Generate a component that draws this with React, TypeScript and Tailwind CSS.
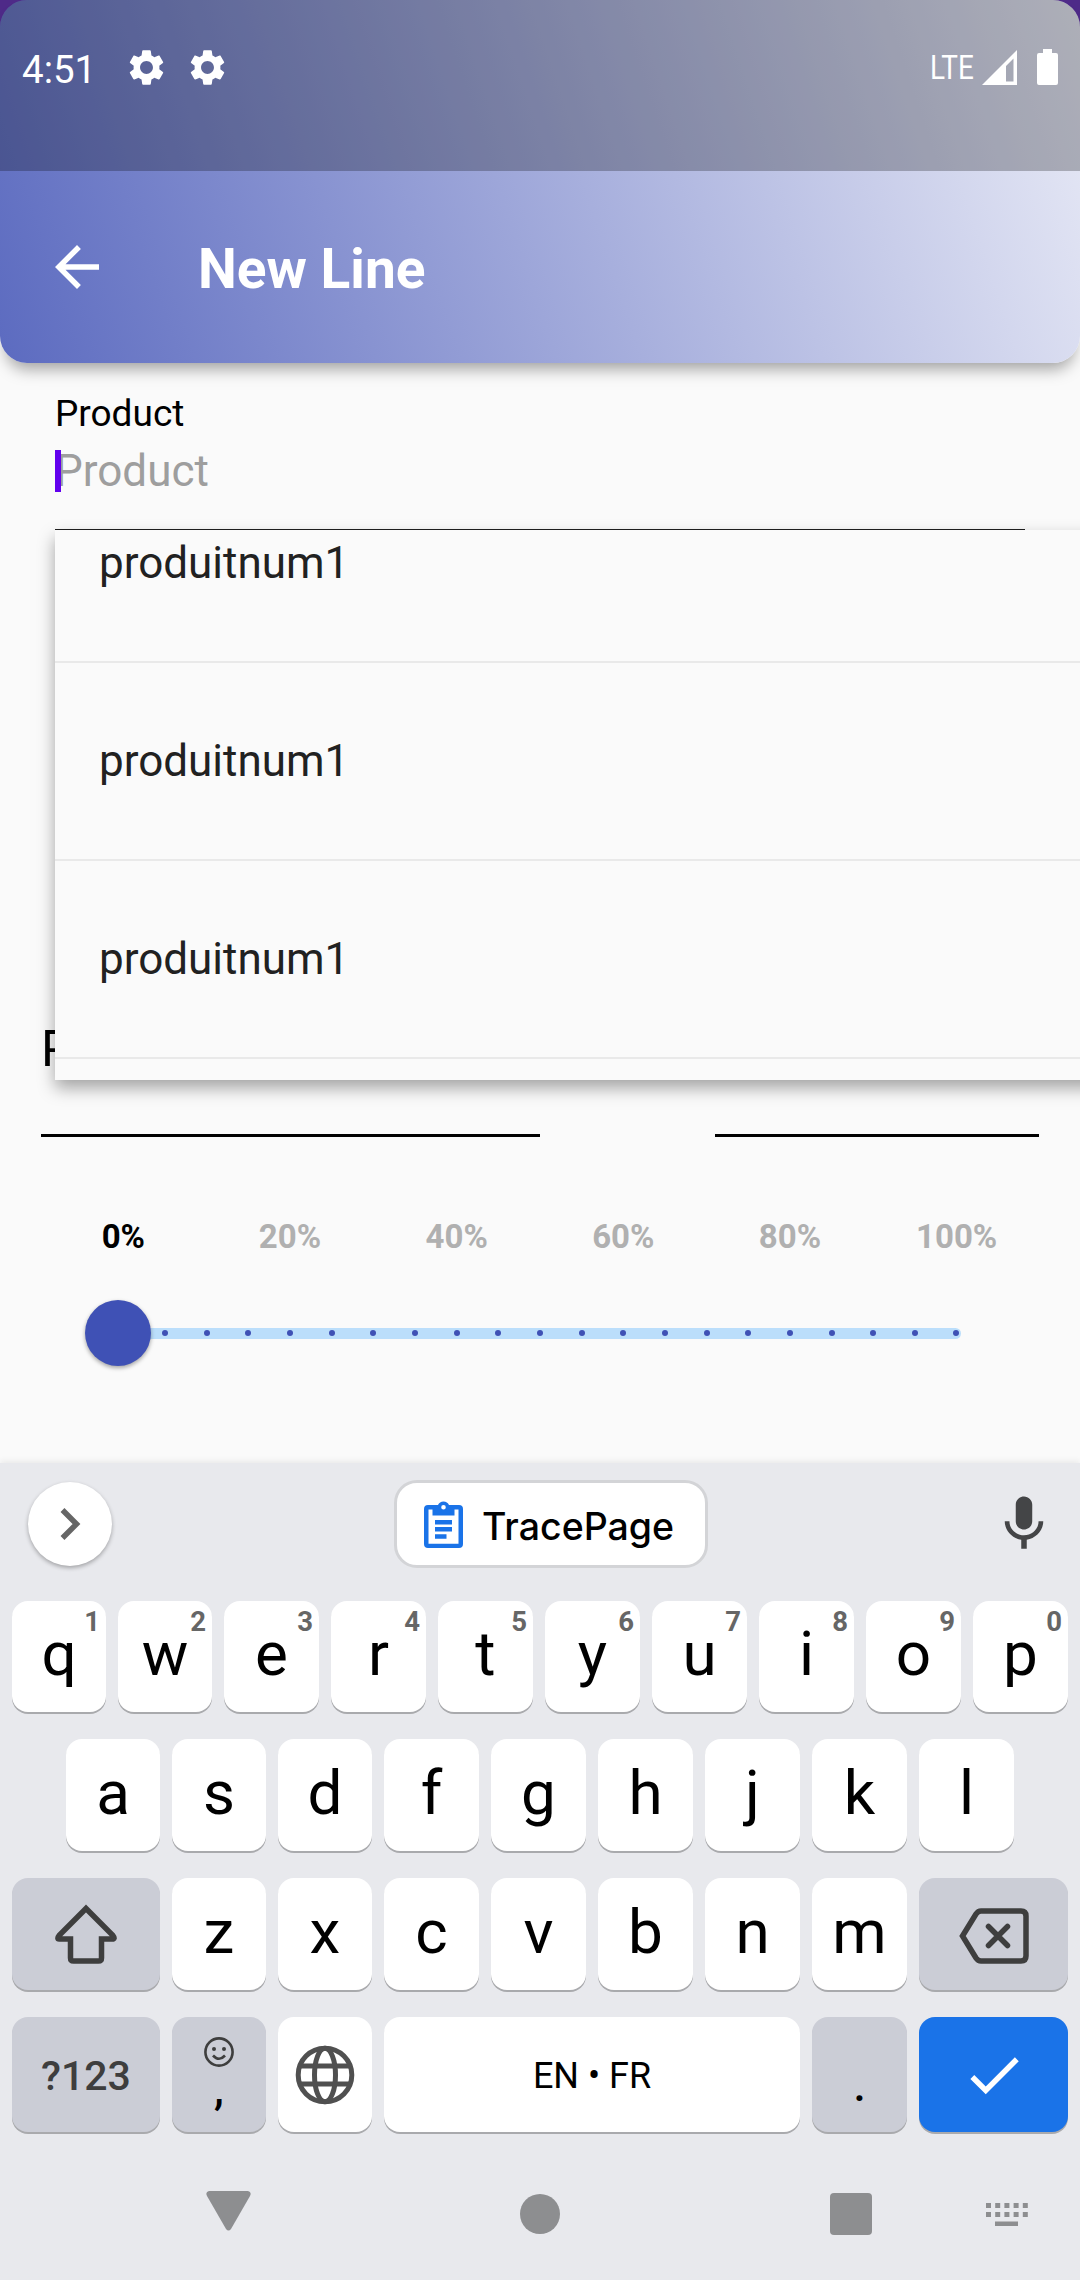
import type { ReactNode } from "react";

const GEAR =
  "M19.14 12.94c.04-.3.06-.61.06-.94 0-.32-.02-.64-.07-.94l2.03-1.58c.18-.14.23-.41.12-.61l-1.92-3.32c-.12-.22-.37-.29-.59-.22l-2.39.96c-.5-.38-1.03-.7-1.62-.94l-.36-2.54c-.04-.24-.24-.41-.48-.41h-3.84c-.24 0-.43.17-.47.41l-.36 2.54c-.59.24-1.13.57-1.62.94l-2.39-.96c-.22-.08-.47 0-.59.22L2.74 8.87c-.12.21-.08.47.12.61l2.03 1.58c-.05.3-.09.63-.09.94s.02.64.07.94l-2.03 1.58c-.18.14-.23.41-.12.61l1.92 3.32c.12.22.37.29.59.22l2.39-.96c.5.38 1.03.7 1.62.94l.36 2.54c.05.24.24.41.48.41h3.84c.24 0 .44-.17.47-.41l.36-2.54c.59-.24 1.13-.56 1.62-.94l2.39.96c.22.08.47 0 .59-.22l1.92-3.32c.12-.22.07-.47-.12-.61l-2.01-1.58zM12 15.6c-1.98 0-3.6-1.62-3.6-3.6s1.62-3.6 3.6-3.6 3.6 1.62 3.6 3.6-1.62 3.6-3.6 3.6z";

function Gear() {
  return (
    <svg viewBox="0 0 24 24" className="h-[43px] w-[43px] fill-white">
      <path d={GEAR} />
    </svg>
  );
}

function Header() {
  return (
    <div className="relative z-10 shrink-0 bg-[linear-gradient(to_bottom,#4e2a88_60px,#fafafa_60px)]">
      <header className="h-[363px] overflow-hidden rounded-[27px] bg-[linear-gradient(71.4deg,#5c6bc0,#e8eaf6)] shadow-[0_12px_16px_-6px_rgba(0,0,0,0.36)]">
        <div className="flex h-[171px] items-start bg-black/25 text-white">
          <span className="ml-[22px] mt-[45px] w-[72px] text-[38.5px] leading-[50px]">4:51</span>
          <div className="ml-[31px] mt-[46px] flex gap-[18px]">
            <Gear />
            <Gear />
          </div>
          <span className="ml-auto mt-[46px] w-[48px] origin-left scale-x-[0.82] text-[34px] leading-[42px]">LTE</span>
          <svg viewBox="0 0 35 35" className="ml-[4px] mt-[50px] h-[35px] w-[35px] fill-white">
            <path fillRule="evenodd" d="M35 0V35H0zM31.5 8.5L24 16V31.5H31.5z" />
          </svg>
          <svg viewBox="0 0 21 36" className="ml-[20px] mr-[22px] mt-[49px] h-[36px] w-[21px] fill-white">
            <path d="M6 0h9v4h4a2 2 0 0 1 2 2v28a2 2 0 0 1-2 2H2a2 2 0 0 1-2-2V6a2 2 0 0 1 2-2h4z" />
          </svg>
        </div>
        <div className="flex h-[192px] items-center">
          <svg viewBox="0 0 24 24" className="ml-[44px] h-[66px] w-[66px] fill-white">
            <path d="M20 11H7.83l5.59-5.59L12 4l-8 8 8 8 1.41-1.41L7.83 13H20z" />
          </svg>
          <h1 className="ml-[88px] pt-[4px] text-[55px] font-bold leading-[64px] text-white">New Line</h1>
        </div>
      </header>
    </div>
  );
}

function Suggestions() {
  return (
    <ul className="absolute left-[55px] top-[167px] h-[550px] w-[1080px] overflow-hidden bg-[#fafafa] shadow-[0_8px_16px_rgba(0,0,0,0.35)]">
      {[0, 1, 2, 3].map((i) => (
        <li
          key={i}
          className="h-[198px] border-b-2 border-[#e9e9e9] pl-[44px] text-[44px] leading-[196px] text-[#212121] first:-mt-[65px]"
        >
          {i < 3 ? "produitnum1" : ""}
        </li>
      ))}
    </ul>
  );
}

function Slider() {
  return (
    <div className="relative mt-[43px] flex h-[66px] items-center pl-[118px]">
      <div className="flex h-[11px] w-[843px] items-center justify-between rounded-full bg-[#bbdefb] pl-[44px] pr-[1.5px]">
        {Array.from({ length: 20 }, (_, i) => (
          <i key={i} className="h-[6px] w-[6px] rounded-full bg-[#3f51b5]" />
        ))}
      </div>
      <div className="absolute left-[85px] top-0 h-[66px] w-[66px] rounded-full bg-[#3f51b5] shadow-[0_2px_4px_rgba(0,0,0,0.35)]" />
    </div>
  );
}

function Form() {
  return (
    <main className="relative h-[1100px] shrink-0 overflow-hidden bg-[#fafafa] pt-[31px]">
      <label className="block pl-[55px] text-[37px] leading-[40px] text-black">Product</label>
      <div className="ml-[55px] mt-[11px] h-[85px] w-[970px] border-b border-[#1f1f1f]">
        <div className="relative text-[44px] leading-[52px] text-[#9e9e9e]">
          Product
          <span className="absolute left-0 top-[5px] h-[42px] w-[5.5px] bg-[#6200ee]" />
        </div>
      </div>
      <div className="ml-[41px] mt-[489px] flex justify-between pr-[41px]">
        <div className="h-[118px] w-[499px] border-b-[3px] border-black text-[50px] leading-[60px] text-black">P</div>
        <div className="h-[118px] w-[324px] border-b-[3px] border-black" />
      </div>
      <div className="ml-[40px] mt-[80px] grid w-[1000px] grid-cols-6 text-center text-[33px] font-bold leading-[40px] text-[#b0b0b0]">
        {["0%", "20%", "40%", "60%", "80%", "100%"].map((t) => (
          <span key={t} className="first:text-black">
            {t}
          </span>
        ))}
      </div>
      <Slider />
      <Suggestions />
    </main>
  );
}

function Key({ children, hint, className }: { children?: ReactNode; hint?: string; className: string }) {
  return (
    <div
      className={`relative flex h-full shrink-0 items-center justify-center rounded-[16px] shadow-[0_2px_0_#a9aaad] ${className}`}
    >
      {children}
      {hint && (
        <span className="absolute right-[6px] top-[4px] text-[27.5px] font-bold leading-[34px] text-[#666]">{hint}</span>
      )}
    </div>
  );
}

// The leading `narrow` keys of a row are one pixel slimmer than the rest.
function Letters({ keys, narrow, hints }: { keys: string; narrow: number; hints?: string }) {
  return keys.split("").map((c, i) => (
    <Key key={c} hint={hints?.[i]} className={i < narrow ? "w-[94px] bg-white" : "w-[95px] bg-white"}>
      <span className="pb-[5px] text-[62px] leading-[72px] text-black">{c}</span>
    </Key>
  ));
}

function Toolbar() {
  return (
    <div className="flex h-[122px] shrink-0 items-center">
      <div className="ml-[28px] flex h-[84px] w-[84px] items-center justify-center rounded-full bg-white shadow-[0_2px_4px_rgba(0,0,0,0.3)]">
        <svg viewBox="0 0 22 34" className="ml-[2px] h-[34px] w-[22px] fill-none stroke-[#666] stroke-[5.5]">
          <path d="M2.5 3L16.5 17L2.5 31" />
        </svg>
      </div>
      <div className="ml-[282px] flex h-[88px] w-[314px] items-center rounded-[23px] border-[3px] border-[#d3d4d7] bg-white">
        <svg viewBox="0 0 39 47" className="ml-[27px] h-[47px] w-[39px]">
          <path
            fill="#1a73e8"
            fillRule="evenodd"
            d="M4 4h10a6 6 0 0 1 11 0h10a4 4 0 0 1 4 4v35a4 4 0 0 1-4 4H4a4 4 0 0 1-4-4V8a4 4 0 0 1 4-4zM4.500 8.500V42.800H34.500V8.500H30.500V14.500H8.500V8.500zM11 19h17v4.500H11zM11 26h17v4.500H11zM11 33.300h11.500v4.400H11zM19.500 4a2.300 2.300 0 1 0 0 4.600a2.300 2.300 0 1 0 0-4.600z"
          />
        </svg>
        <span className="ml-[19px] pt-[6px] font-['Inter',sans-serif] text-[37.5px] font-medium leading-[46px] text-black">
          TracePage
        </span>
      </div>
      <svg viewBox="0 0 24 24" className="ml-auto mr-[23px] h-[66px] w-[66px] fill-[#444547]">
        <path d="M12 14c1.660 0 2.990-1.340 2.990-3L15 5c0-1.660-1.340-3-3-3S9 3.340 9 5v6c0 1.660 1.340 3 3 3zm5.300-3c0 3-2.540 5.100-5.300 5.100S6.700 14 6.700 11H5c0 3.410 2.720 6.230 6 6.720V21h2v-3.280c3.280-.48 6-3.300 6-6.720h-1.700z" />
      </svg>
    </div>
  );
}

function Keyboard() {
  return (
    <section className="relative flex h-[817px] shrink-0 flex-col bg-[#e8e9ed] shadow-[0_-2px_6px_rgba(0,0,0,0.07)]">
      <Toolbar />
      <div className="mt-[16px] flex shrink-0 flex-col items-center">
        <div className="flex h-[111px] gap-[12px]">
          <Letters keys="qwertyuiop" narrow={2} hints="1234567890" />
        </div>
        <div className="mt-[27px] flex h-[112px] gap-[12px]">
          <Letters keys="asdfghjkl" narrow={3} />
        </div>
        <div className="mt-[27px] flex h-[112px] gap-[12px]">
          <Key className="w-[148px] bg-[#cbcdd6]">
            <svg viewBox="0 0 62 60" className="h-[60px] w-[62px] fill-none stroke-[#3e3e3e] stroke-[5.5]">
              <path d="M31 4.500L4.500 31Q1 35.500 5 35H15.500V54Q15.500 57 18.500 57H43.500Q46.500 57 46.500 54V35H57Q61 35.500 57.500 31Z" />
            </svg>
          </Key>
          <Letters keys="zxcvbnm" narrow={2} />
          <Key className="w-[149px] bg-[#cbcdd6]">
            <svg
              viewBox="0 0 70 56"
              strokeLinecap="round"
              className="mt-[4px] h-[56px] w-[70px] fill-none stroke-[#3e3e3e] stroke-[5.5]"
            >
              <path d="M3.500 28L17 6Q19 3 22 3H62Q67 3 67 8V48Q67 53 62 53H22Q19 53 17 50Z" />
              <path d="M29.500 18.500L48.500 37.500M48.500 18.500L29.500 37.500" />
            </svg>
          </Key>
        </div>
        <div className="mt-[27px] flex h-[115px] gap-[12px]">
          <Key className="w-[148px] bg-[#cbcdd6]">
            <span className="pt-[3px] text-[41px] font-medium leading-[50px] text-[#3e3e3e]">?123</span>
          </Key>
          <Key className="w-[94px] bg-[#cbcdd6]">
            <div className="flex h-full flex-col items-center pt-[20px]">
              <svg viewBox="0 0 30 30" className="h-[30px] w-[30px] fill-none stroke-[#3e3e3e] stroke-[2.6]">
                <circle cx="15" cy="15" r="13.6" />
                <circle cx="10" cy="12" r="2" className="fill-[#3e3e3e] stroke-none" />
                <circle cx="20" cy="12" r="2" className="fill-[#3e3e3e] stroke-none" />
                <path d="M9 18.500Q15 25 21 18.500" />
              </svg>
              <span className="text-[44px] font-medium leading-[44px] text-black">,</span>
            </div>
          </Key>
          <Key className="w-[94px] bg-white">
            <svg viewBox="0 0 60 60" className="h-[60px] w-[60px] fill-none stroke-[#505050] stroke-[5]">
              <circle cx="30" cy="30" r="26.800" />
              <ellipse cx="30" cy="30" rx="10.500" ry="26.800" />
              <path d="M5 21H55M5 39H55" />
            </svg>
          </Key>
          <Key className="w-[416px] bg-white">
            <span className="pt-[3px] text-[36px] leading-[44px] text-black">EN • FR</span>
          </Key>
          <Key className="w-[95px] bg-[#cbcdd6]">
            <span className="mt-[23px] text-[44px] font-medium leading-[50px] text-black">.</span>
          </Key>
          <Key className="w-[149px] bg-[#1a73e8]">
            <svg viewBox="0 0 24 24" className="h-[66px] w-[66px] fill-white">
              <path d="M9 16.170L4.830 12l-1.420 1.410L9 19 21 7l-1.410-1.410z" />
            </svg>
          </Key>
        </div>
      </div>
      <nav className="flex h-[148px] shrink-0 items-center pt-[16px] text-[#8d8e90]">
        <svg viewBox="0 0 45 40" className="mb-[6px] ml-[206px] h-[40px] w-[45px] fill-current">
          <path d="M3 0H42Q46 1 44 5L25 38Q22.500 41 20 38L1 5Q-1 1 3 0Z" />
        </svg>
        <i className="ml-[269px] h-[40px] w-[40px] rounded-full bg-current" />
        <i className="ml-[270px] h-[42px] w-[42px] rounded-[4px] bg-current" />
        <svg viewBox="0 0 42 23" className="ml-[114px] h-[23px] w-[42px] fill-current">
          {[0, 9.2, 18.4, 27.6, 36.8].map((x) => (
            <g key={x}>
              <rect x={x} y="0" width="5" height="5" />
              <rect x={x} y="9" width="5" height="5" />
            </g>
          ))}
          <rect x="9" y="18.500" width="23" height="4.500" />
        </svg>
      </nav>
    </section>
  );
}

export default function App() {
  return (
    <div className="flex h-[2280px] w-[1080px] flex-col overflow-hidden bg-[#fafafa] font-['Roboto',sans-serif]">
      <Header />
      <Form />
      <Keyboard />
    </div>
  );
}
